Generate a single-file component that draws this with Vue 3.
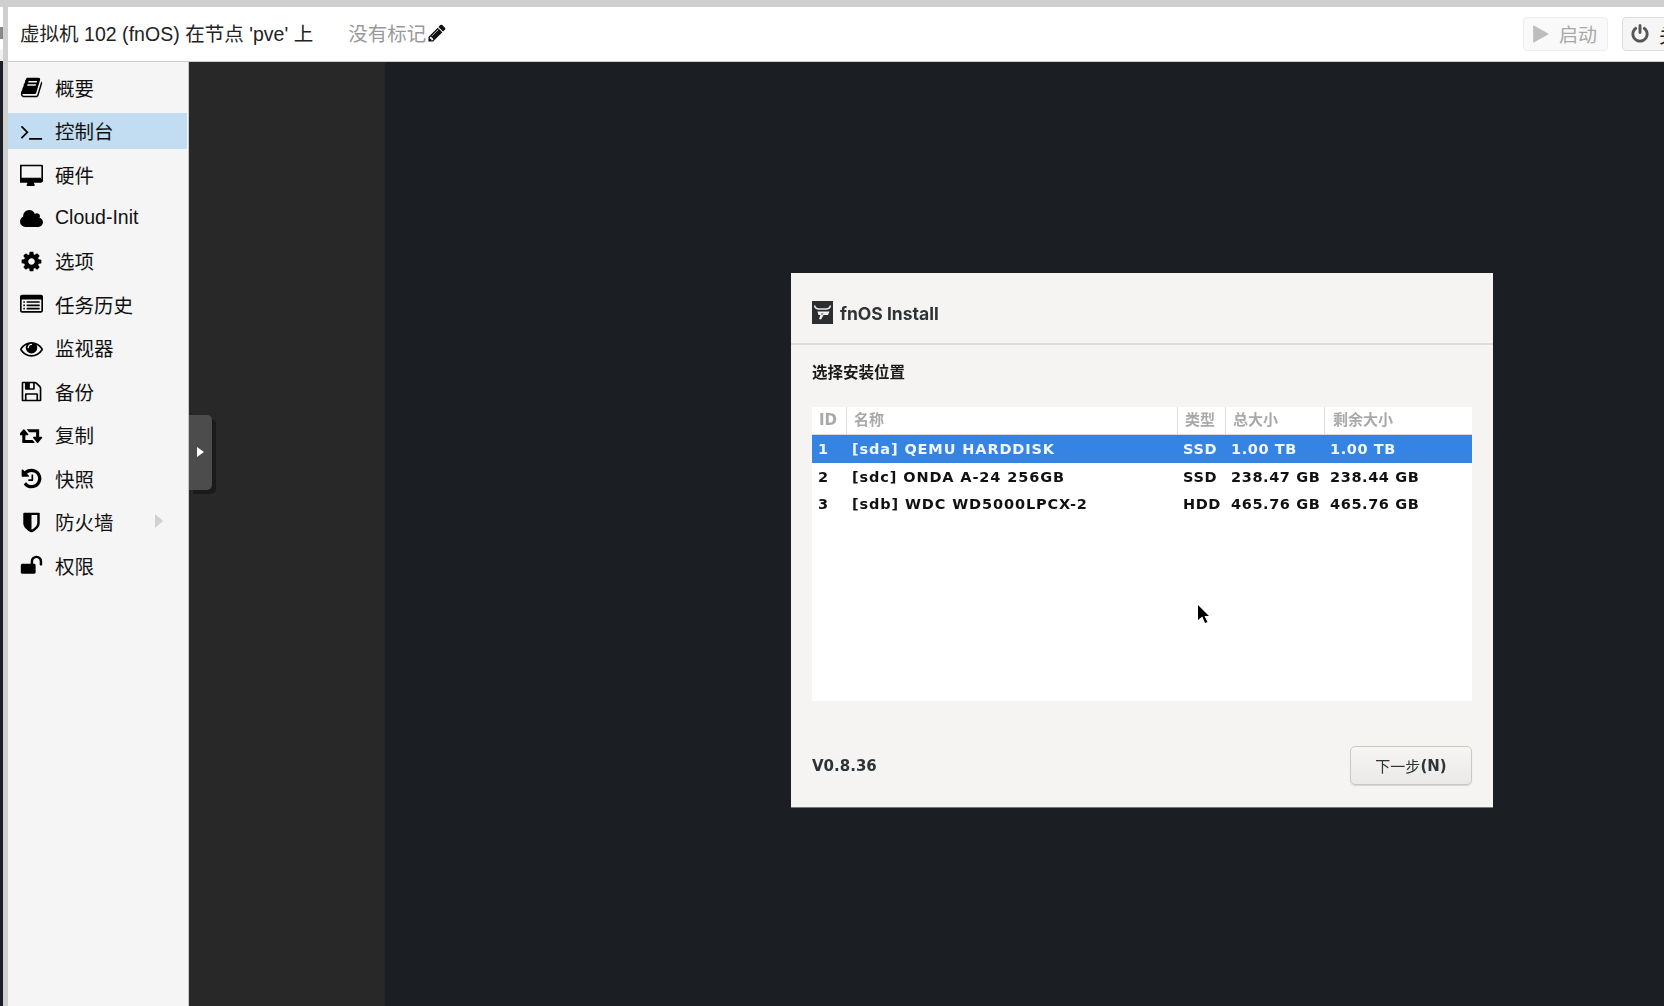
<script setup>
const icons = {
  book: 'M1703 478q40 57 18 129l-275 906q-19 64-76.500 107.500t-122.500 43.500h-923q-77 0-148.500-53.500t-99.500-131.500q-24-67-2-127 0-4 3-27t4-37q1-8-3-21.500t-3-19.500q2-11 8-21t16.500-23.500 16.500-23.500q23-38 45-91.500t30-91.500q3-10 .5-30t-.5-28q3-11 17-28t17-23q21-36 42-92t25-90q1-9-2.500-32t.5-28q4-13 22-30.500t22-22.500q19-26 42.500-84.500t27.500-96.500q1-8-3-25.500t-2-26.500q2-8 9-18t18-23 17-21q8-12 16.500-30.500t15-35 16-36 19.500-32 26.500-23.500 36-11.500 47.500 5.500l-1 3q38-9 51-9h761q74 0 114 56t18 130l-274 906q-36 119-71.500 153.500t-128.500 34.500h-869q-27 0-38 15-11 16-1 43 24 70 144 70h923q29 0 56-15.500t35-41.500l300-987q7-22 5-57 38 15 59 43zm-1064 2q-4 13 2 22.500t20 9.500h608q13 0 25.500-9.500t16.500-22.500l21-64q4-13-2-22.500t-20-9.500h-608q-13 0-25.500 9.500t-16.500 22.500zm-83 256q-4 13 2 22.500t20 9.500h608q13 0 25.500-9.500t16.500-22.500l21-64q4-13-2-22.500t-20-9.500h-608q-13 0-25.500 9.500t-16.500 22.500z',
  terminal: 'M649 983l-466 466q-10 10-23 10t-23-10l-50-50q-10-10-10-23t10-23l393-393-393-393q-10-10-10-23t10-23l50-50q10-10 23-10t23 10l466 466q10 10 10 23t-10 23zm1079 457v64q0 14-9 23t-23 9h-960q-14 0-23-9t-9-23v-64q0-14 9-23t23-9h960q14 0 23 9t9 23z',
  desktop: 'M1664 1248v-960q0-13-9.500-22.500t-22.500-9.500h-1472q-13 0-22.500 9.500t-9.500 22.500v832q0 13 9.500 22.500t22.500 9.500h1472q13 0 22.500-9.500t9.500-22.500zm128-960v1088q0 66-47 113t-113 47h-544q0 37 16 77.500t32 71 16 43.500q0 26-19 45t-45 19h-512q-26 0-45-19t-19-45q0-14 16-44t32-70 16-78h-544q-66 0-113-47t-47-113v-1088q0-66 47-113t113-47h1632q66 0 113 47t47 113z',
  cloud: 'M1920 1216q0 159-112.500 271.500t-271.500 112.500h-1088q-185 0-316.500-131.500t-131.500-316.500q0-132 71-241.500t187-163.500q-2-28-2-43 0-212 150-362t362-150q158 0 286.500 88t187.500 230q70-62 166-62 106 0 181 75t75 181q0 75-41 138 129 30 213 134.500t84 239.500z',
  cog: 'M1152 896q0-106-75-181t-181-75-181 75-75 181 75 181 181 75 181-75 75-181zm512-109v222q0 12-8 23t-20 13l-185 28q-19 54-39 91 35 50 107 138 10 12 10 25t-9 23q-27 37-99 108t-94 71q-12 0-26-9l-138-108q-44 23-91 38-16 136-29 186-7 28-36 28h-222q-14 0-24.500-8.500t-11.500-21.500l-28-184q-49-16-90-37l-141 107q-10 9-25 9-14 0-25-11-126-114-165-168-7-10-7-23 0-12 8-23 15-21 51-66.500t54-70.500q-27-50-41-99l-183-27q-13-2-21-12.500t-8-23.500v-222q0-12 8-23t19-13l186-28q14-46 39-92-40-57-107-138-10-12-10-24 0-10 9-23 26-36 98.500-107.500t94.500-71.500q13 0 26 10l138 107q44-23 91-38 16-136 29-186 7-28 36-28h222q14 0 24.500 8.500t11.500 21.500l28 184q49 16 90 37l142-107q9-9 24-9 13 0 25 10 129 119 165 170 7 8 7 22 0 12-8 23-15 21-51 66.500t-54 70.500q26 50 41 98l183 28q13 2 21 12.500t8 23.500z',
  list: 'M384 1184v64q0 13-9.500 22.500t-22.500 9.500h-64q-13 0-22.500-9.500t-9.500-22.500v-64q0-13 9.500-22.500t22.500-9.500h64q13 0 22.500 9.500t9.500 22.500zm0-256v64q0 13-9.500 22.500t-22.500 9.500h-64q-13 0-22.500-9.500t-9.500-22.500v-64q0-13 9.500-22.500t22.500-9.500h64q13 0 22.500 9.500t9.500 22.500zm0-256v64q0 13-9.500 22.500t-22.500 9.500h-64q-13 0-22.500-9.500t-9.500-22.500v-64q0-13 9.500-22.500t22.500-9.500h64q13 0 22.500 9.500t9.500 22.500zm1152 512v64q0 13-9.500 22.500t-22.500 9.500h-960q-13 0-22.500-9.500t-9.500-22.500v-64q0-13 9.500-22.500t22.500-9.500h960q13 0 22.500 9.500t9.500 22.500zm0-256v64q0 13-9.500 22.500t-22.500 9.500h-960q-13 0-22.500-9.500t-9.500-22.500v-64q0-13 9.500-22.500t22.500-9.500h960q13 0 22.500 9.500t9.500 22.500zm0-256v64q0 13-9.500 22.500t-22.500 9.500h-960q-13 0-22.500-9.500t-9.500-22.500v-64q0-13 9.500-22.500t22.500-9.500h960q13 0 22.500 9.500t9.500 22.500zm128 704v-832q0-13-9.500-22.500t-22.500-9.500h-1472q-13 0-22.500 9.500t-9.500 22.500v832q0 13 9.500 22.500t22.500 9.500h1472q13 0 22.500-9.500t9.500-22.500zm128-1088v1088q0 66-47 113t-113 47h-1472q-66 0-113-47t-47-113v-1088q0-66 47-113t113-47h1472q66 0 113 47t47 113z',
  eye: 'M1664 960q-152-236-381-353 61 104 61 225 0 185-131.500 316.500t-316.500 131.500-316.500-131.500-131.500-316.500q0-121 61-225-229 117-381 353 133 205 333.500 326.500t434.500 121.500 434.500-121.500 333.500-326.500zm-720-384q0-20-14-34t-34-14q-125 0-214.500 89.500t-89.500 214.500q0 20 14 34t34 14 34-14 14-34q0-86 61-147t147-61q20 0 34-14t14-34zm848 384q0 34-20 69-140 230-376.500 368.500t-499.500 138.500-499.500-139-376.500-368q-20-35-20-69t20-69q140-229 376.500-368t499.500-139 499.500 139 376.500 368q20 35 20 69z',
  floppy: 'M512 1536h768v-384h-768v384zm896 0h128v-896q0-14-10-38.500t-20-34.500l-281-281q-10-10-34-20t-39-10v416q0 40-28 68t-68 28h-576q-40 0-68-28t-28-68v-416h-128v1280h128v-416q0-40 28-68t68-28h832q40 0 68 28t28 68v416zm-384-928v-320q0-13-9.500-22.500t-22.500-9.500h-192q-13 0-22.500 9.500t-9.500 22.500v320q0 13 9.500 22.500t22.500 9.500h192q13 0 22.500-9.500t9.500-22.500zm640 32v928q0 40-28 68t-68 28h-1344q-40 0-68-28t-28-68v-1344q0-40 28-68t68-28h928q40 0 88 20t76 48l280 280q28 28 48 76t20 88z',
  retweet: 'M1216 1488q0 13-9.500 22.500t-22.500 9.500h-960q-8 0-13.500-2t-9-7-5.500-8-3-11.500-1-11.500v-600h-192q-26 0-45-19t-19-45q0-24 15-41l320-384q19-22 49-22t49 22l320 384q15 17 15 41 0 26-19 45t-45 19h-192v384h576q16 0 25 11l160 192q7 11 7 21zm640-416q0 24-15 41l-320 384q-20 23-49 23t-49-23l-320-384q-15-17-15-41 0-26 19-45t45-19h192v-384h-576q-16 0-25-12l-160-192q-7-9-7-20 0-13 9.500-22.500t22.500-9.500h960q8 0 13.500 2t9 7 5.500 8 3 11.500 1 11.500v600h192q26 0 45 19t19 45z',
  history: 'M1664 896q0 156-61 298t-164 245-245 164-298 61q-172 0-327-72.500t-264-204.500q-7-10-6.500-22.500t8.500-20.500l137-138q10-9 25-9 16 2 23 12 73 95 179 147t225 52q104 0 198.500-40.500t163.500-109.500 109.500-163.500 40.500-198.500-40.500-198.500-109.500-163.500-163.500-109.500-198.500-40.500q-98 0-188 35.500t-160 101.500l137 138q31 30 14 69-17 40-59 40h-448q-26 0-45-19t-19-45v-448q0-42 40-59 39-17 69 14l130 129q107-101 244.500-156.500t284.500-55.500q156 0 298 61t245 164 164 245 61 298zm-640-288v448q0 14-9 23t-23 9h-320q-14 0-23-9t-9-23v-64q0-14 9-23t23-9h224v-352q0-14 9-23t23-9h64q14 0 23 9t9 23z',
  shield: 'M1344 960v-640h-448v1137q119-63 213-137 235-184 235-360zm192-768v768q0 86-33.500 170.500t-83 150-118 127.500-126.500 103-121 77.500-89.500 49.500-42.500 20q-12 6-26 6t-26-6q-16-7-42.500-20t-89.500-49.500-121-77.500-126.500-103-118-127.500-83-150-33.500-170.500v-768q0-26 19-45t45-19h1152q26 0 45 19t19 45z',
  unlock: 'M1728 576v256q0 26-19 45t-45 19h-64q-26 0-45-19t-19-45v-256q0-106-75-181t-181-75-181 75-75 181v192h96q40 0 68 28t28 68v576q0 40-28 68t-68 28h-960q-40 0-68-28t-28-68v-576q0-40 28-68t68-28h672v-192q0-185 131.500-316.500t316.500-131.500 316.500 131.500 131.500 316.500z',
  pencil: 'M491 1536l91-91-235-235-91 91v107h128v128h107zm523-928q0-22-22-22-10 0-17 7l-542 542q-7 7-7 17 0 22 22 22 10 0 17-7l542-542q7-7 7-17zm-54-192l416 416-832 832h-416v-416zm683 96q0 53-37 90l-166 166-416-416 166-165q36-38 90-38 53 0 91 38l235 234q37 39 37 91z',
  play: 'M1576 927l-1328 738q-23 13-39.500 3t-16.500-36v-1472q0-26 16.500-36t39.500 3l1328 738q23 13 23 31t-23 31z',
  power: 'M1664 896q0 156-61 298t-164 245-245 164-298 61-298-61-245-164-164-245-61-298q0-182 80.500-343t226.500-270q43-32 95.500-25t83.500 50q32 42 24.500 94.500t-49.500 84.500q-98 74-151.500 181t-53.500 228q0 104 40.500 198.500t109.500 163.500 163.500 109.500 198.500 40.500 198.500-40.500 163.500-109.500 109.500-163.500 40.500-198.500q0-121-53.500-228t-151.500-181q-42-32-49.500-84.500t24.500-94.500q31-43 84-50t95 25q146 109 226.500 270t80.500 343zm-640-768v640q0 52-38 90t-90 38-90-38-38-90v-640q0-52 38-90t90-38 90 38 38 90z'
}

const menu = [
  { label: '概要', icon: 'book' },
  { label: '控制台', icon: 'terminal', active: true },
  { label: '硬件', icon: 'desktop' },
  { label: 'Cloud-Init', icon: 'cloud', vb: '0 0 1920 1792' },
  { label: '选项', icon: 'cog' },
  { label: '任务历史', icon: 'list' },
  { label: '监视器', icon: 'eye' },
  { label: '备份', icon: 'floppy' },
  { label: '复制', icon: 'retweet', vb: '0 0 1920 1792' },
  { label: '快照', icon: 'history' },
  { label: '防火墙', icon: 'shield', arrow: true },
  { label: '权限', icon: 'unlock' }
]

const disks = [
  { id: 1, name: '[sda] QEMU HARDDISK', type: 'SSD', total: '1.00 TB', free: '1.00 TB', selected: true },
  { id: 2, name: '[sdc] ONDA A-24 256GB', type: 'SSD', total: '238.47 GB', free: '238.44 GB' },
  { id: 3, name: '[sdb] WDC WD5000LPCX-2', type: 'HDD', total: '465.76 GB', free: '465.76 GB' }
]
</script>

<template>
  <div class="page">
    <div class="top-strip"></div>
    <div class="body">
      <div class="edge">
        <div class="edge-white"><i></i></div>
        <div class="edge-tab"></div>
        <div class="edge-dark"></div>
      </div>
      <div class="main">
        <header class="titlebar">
          <span class="title">虚拟机 102 (fnOS) 在节点 'pve' 上</span>
          <span class="tags">没有标记</span>
          <svg class="pencil" viewBox="0 0 1792 1792"><path :d="icons.pencil" /></svg>
          <div class="spacer"></div>
          <div class="tb-btn start">
            <svg viewBox="0 0 1792 1792"><path :d="icons.play" /></svg>
            <span>启动</span>
          </div>
          <div class="tb-btn shut">
            <svg viewBox="0 0 1792 1792"><path :d="icons.power" /></svg>
            <span>关</span>
          </div>
        </header>
        <div class="content">
          <nav class="sidebar">
            <div v-for="m in menu" :key="m.label" class="item-row">
              <div class="item" :class="{ active: m.active }">
                <span class="ico">
                  <svg :viewBox="m.vb || '0 0 1792 1792'"><path :d="icons[m.icon]" /></svg>
                </span>
                <span class="lbl">{{ m.label }}</span>
                <span v-if="m.arrow" class="arrow"></span>
              </div>
            </div>
          </nav>
          <div class="console">
            <div class="side-dark"></div>
            <div class="screen">
              <section class="dialog">
                <div class="d-head">
                  <svg class="logo" viewBox="0 0 21 23">
                    <rect width="21" height="23" fill="#2b2d2e" />
                    <path d="M2.500 4.500c.5 2.500 2 3.500 4.500 3.500h7c2.500 0 4-1 4.500-3.500" fill="none" stroke="#e8e8e8" stroke-width="1.500" />
                    <path d="M5.500 10.500h12l-1.500 3.500h-4.500l-2.500 4.500-2-.5 1.500-4H6.500zM10 14l1.500-1.500H9z" fill="#f2f2f2" />
                  </svg>
                  <span class="d-title">fnOS Install</span>
                </div>
                <div class="d-body">
                  <div class="d-sub">选择安装位置</div>
                  <div class="table">
                    <div class="tr th">
                      <div class="c c-id">ID</div>
                      <div class="c c-name">名称</div>
                      <div class="c c-type">类型</div>
                      <div class="c c-total">总大小</div>
                      <div class="c c-free">剩余大小</div>
                    </div>
                    <div v-for="d in disks" :key="d.id" class="tr td" :class="{ sel: d.selected }">
                      <div class="c c-id">{{ d.id }}</div>
                      <div class="c c-name">{{ d.name }}</div>
                      <div class="c c-type">{{ d.type }}</div>
                      <div class="c c-total">{{ d.total }}</div>
                      <div class="c c-free">{{ d.free }}</div>
                    </div>
                  </div>
                  <div class="d-foot">
                    <span class="ver">V0.8.36</span>
                    <div class="next"><span class="cjk">下一步</span><b>(N)</b></div>
                  </div>
                </div>
              </section>
            </div>
            <div class="handle"><span></span></div>
            <svg class="cursor" viewBox="0 0 12 18"><path d="M0 0l11 11H6.500l3 6-2.500 1-2.700-6.500L0 15z" fill="#000" /></svg>
          </div>
        </div>
      </div>
    </div>
  </div>
</template>

<style>
html, body { margin: 0; padding: 0; background: #ccc; overflow: hidden; }
</style>

<style scoped>
.page {
  width: 1664px;
  height: 1006px;
  display: flex;
  flex-direction: column;
  overflow: hidden;
  background: #cfcfcf;
  font-family: "Liberation Sans", "Noto Sans CJK SC", sans-serif;
}
.top-strip { height: 7px; flex: none; background: #cfcfcf; }
.body { flex: 1; display: flex; min-height: 0; }
.edge {
  width: 3px;
  flex: none;
  margin-right: 5px;
  display: flex;
  flex-direction: column;
}
.edge-white { height: 43px; background: #fff; padding-top: 20px; box-sizing: border-box; }
.edge-white i { display: block; width: 3px; height: 12px; background: #888; }
.edge-tab { height: 11px; background: #f0f0f0; }
.edge-dark { flex: 1; background: #1b1e23; }
.main { flex: 1; min-width: 0; display: flex; flex-direction: column; }
.titlebar {
  height: 55px;
  flex: none;
  box-sizing: border-box;
  display: flex;
  align-items: center;
  background: #fff;
  border-bottom: 1px solid #ccc;
  padding: 0 0 3px 12px;
  overflow: hidden;
  font-size: 19.5px;
  white-space: nowrap;
}
.title { color: #222; letter-spacing: 0.03px; }
.tags { color: #999; margin-left: 35px; }
.pencil { width: 20px; height: 20px; margin-left: 1px; fill: #111; }
.spacer { flex: 1; }
.tb-btn {
  height: 34px;
  flex: none;
  box-sizing: border-box;
  display: flex;
  align-items: center;
  border: 1px solid #eee;
  border-radius: 4px;
  background: #f9f9f9;
  margin-top: 3px;
}
.tb-btn svg { width: 20px; height: 20px; }
.start { width: 85px; padding-left: 7px; color: #b0b0b0; fill: #bdbdbd; }
.start span { margin-left: 8px; color: #a8a8a8; font-size: 19px; position: relative; top: -1px; }
.shut {
  width: 80px;
  margin-left: 14px;
  margin-right: -38px;
  padding-left: 7px;
  background: #f5f5f5;
  border-color: #ddd;
  fill: #555;
  color: #222;
}
.shut span { margin-left: 9px; }
.content { flex: 1; min-height: 0; display: flex; }
.sidebar {
  width: 180px;
  flex: none;
  background: #f5f5f5;
  border-right: 1px solid #c8c8c8;
  padding-top: 3.500px;
}
.item-row {
  height: 43.450px;
  display: flex;
  align-items: center;
}
.item {
  width: 179px;
  height: 36px;
  margin-top: 1px;
  display: flex;
  align-items: center;
  position: relative;
  font-size: 19.5px;
  color: #111;
}
.item.active { background: #c2ddf2; }
.ico {
  width: 47px;
  flex: none;
  display: flex;
  justify-content: center;
}
.ico svg { width: 23px; height: 23px; fill: #000; }
.lbl { margin-left: 0; position: relative; top: -0.5px; }
.arrow {
  position: absolute;
  left: 147px;
  top: 10px;
  width: 0;
  height: 0;
  border-left: 8px solid #d0d0d0;
  border-top: 7.500px solid transparent;
  border-bottom: 7.500px solid transparent;
}
.console {
  flex: 1;
  min-width: 0;
  position: relative;
  display: flex;
  background: #1b1e23;
}
.side-dark { width: 196px; flex: none; background: #282828; }
.screen { flex: 1; min-width: 0; padding: 211px 0 0 406px; }
.dialog {
  width: 702px;
  height: 535px;
  background: #f5f4f2;
  border-bottom: 1px solid #777;
  box-sizing: border-box;
  color: #111;
}
.d-head {
  height: 72px;
  box-sizing: border-box;
  display: flex;
  align-items: center;
  padding: 9px 0 0 21px;
  border-bottom: 2px solid #dddbd9;
}
.logo { width: 21px; height: 23px; flex: none; filter: blur(0.3px); }
.d-title {
  margin-left: 7px;
  font-family: "Inter", "Noto Sans", sans-serif;
  font-weight: 700;
  font-size: 17.500px;
  color: #2e3436;
  filter: blur(0.3px);
  position: relative;
  top: 1px;
}
.d-body { padding: 0 21px; filter: blur(0.35px); }
.d-sub {
  font-family: "Noto Sans CJK SC", sans-serif;
  font-weight: 700;
  font-size: 15.500px;
  line-height: 20px;
  padding-top: 16px;
  height: 24px;
  color: #1a1a1a;
}
.table {
  height: 294px;
  margin-top: 22px;
  background: #fff;
  font-family: "DejaVu Sans", "Noto Sans CJK SC", sans-serif;
  font-weight: 700;
}
.tr { display: flex; }
.c { box-sizing: border-box; white-space: nowrap; overflow: hidden; }
.c-id { width: 34px; }
.c-name { width: 331px; }
.c-type { width: 48px; }
.c-total { width: 99px; }
.c-free { width: 148px; }
.th {
  height: 28px;
  box-sizing: border-box;
  border-bottom: 1px solid #d8d8d8;
  color: #a9a9a9;
  font-size: 15px;
  line-height: 27px;
}
.th .c { padding-left: 7px; }
.th .c + .c { border-left: 1px solid #ddd; }
.th .c-free { padding-left: 8px; }
.td {
  height: 27.500px;
  line-height: 28px;
  font-size: 14.500px;
  letter-spacing: 0.6px;
  color: #111;
}
.td .c { padding-left: 6px; }
.td .c-name { letter-spacing: 0.88px; }
.td.sel { background: #3584e4; color: #f2f7fd; }
.d-foot {
  display: flex;
  align-items: center;
  justify-content: space-between;
  margin-top: 45px;
}
.ver {
  font-family: "DejaVu Sans", sans-serif;
  font-weight: 700;
  font-size: 15px;
  color: #2e3436;
}
.next {
  width: 122px;
  height: 39px;
  box-sizing: border-box;
  display: flex;
  align-items: center;
  justify-content: center;
  border: 1px solid #cdc7c2;
  border-radius: 5px;
  background: linear-gradient(#f6f5f4, #ebe9e7);
  box-shadow: 0 1px 1px #d5d3d0;
  color: #2e3436;
  font-size: 15px;
  font-family: "DejaVu Sans", "Noto Sans CJK SC", sans-serif;
}
.next .cjk { font-family: "Noto Sans CJK SC", sans-serif; }
.handle {
  position: absolute;
  left: 0;
  top: 353px;
  width: 23px;
  height: 75px;
  background: #4c4c4c;
  border-radius: 0 5px 5px 0;
  box-shadow: 4px 4px 0 #1a1a1a;
}
.handle span {
  position: absolute;
  left: 8px;
  top: 32px;
  width: 0;
  height: 0;
  border-left: 7px solid #fff;
  border-top: 5px solid transparent;
  border-bottom: 5px solid transparent;
}
.cursor {
  position: absolute;
  left: 1009px;
  top: 543px;
  width: 12px;
  height: 18px;
}
</style>
